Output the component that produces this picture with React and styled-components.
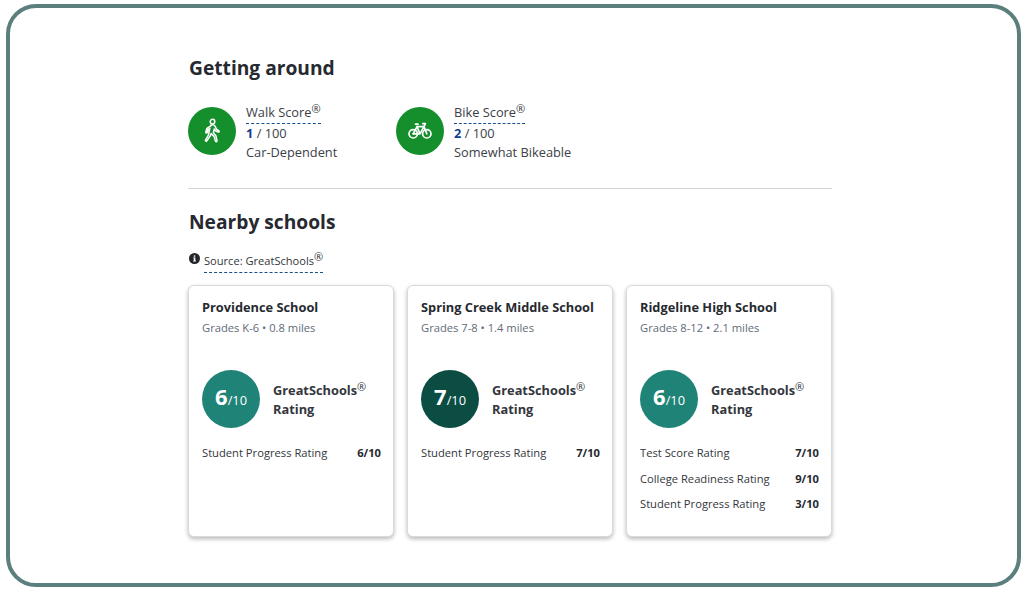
import styled, { createGlobalStyle } from "styled-components";

const GlobalStyle = createGlobalStyle`
  html, body {
    margin: 0;
    padding: 0;
    background: #fff;
    font-family: "Open Sans", "Liberation Sans", sans-serif;
    color: #2a2d33;
  }
`;

const Frame = styled.div`
  box-sizing: border-box;
  width: 1015px;
  height: 583px;
  margin: 4px 0 0 6px;
  border: 4px solid #5b7f7c;
  border-radius: 30px;
  padding: 46px 0 0 178px;
`;

const Content = styled.div`
  width: 644px;
`;

const Heading = styled.h2`
  margin: 0 0 0 1px;
  font-size: 19.2px;
  line-height: 28px;
  font-weight: 700;
  color: #26292f;
`;

const Scores = styled.div`
  display: flex;
  margin-top: 19px;
  height: 70px;
`;

const Score = styled.div`
  display: flex;
  width: 208px;
`;

const ScoreBadge = styled.div`
  width: 48px;
  height: 48px;
  margin-top: 6px;
  border-radius: 50%;
  background: #158f2c;
  color: #fff;
  display: flex;
  align-items: center;
  justify-content: center;
  flex-shrink: 0;
`;

const ScoreText = styled.div`
  margin-left: 10px;
  padding-top: 1px;
  font-size: 12.8px;
  line-height: 19px;
  color: #3c4047;
`;

const ScoreName = styled.div`
  display: inline-block;
  height: 21px;
  line-height: 20px;
  border-bottom: 1px dashed #1a4f8a;
`;

const Mark = styled.sup`
  font-size: 11px;
  line-height: 0;
  vertical-align: 4px;
  font-weight: 400;
  font-variant-emoji: text;
  color: #33363c;
`;

const ScoreValue = styled.div`
  b {
    color: #123f8c;
    font-weight: 700;
  }
`;

const Divider = styled.hr`
  margin: 17px 0 0;
  border: 0;
  border-top: 1px solid #d4d6d8;
`;

const SchoolsHeading = styled(Heading)`
  margin-top: 19px;
`;

const Source = styled.div`
  display: flex;
  margin: 15px 0 0 1px;
  height: 24px;
`;

const InfoIcon = styled.svg`
  width: 11px;
  height: 11px;
  margin-top: 2px;
  margin-right: 4px;
`;

const SourceLabel = styled.span`
  display: inline-block;
  height: 21px;
  font-size: 11.1px;
  line-height: 20px;
  color: #33363c;
  border-bottom: 1px dashed #1a4f8a;
`;

const Cards = styled.div`
  display: grid;
  grid-template-columns: repeat(3, 206px);
  gap: 13px;
  margin-top: 10px;
`;

const Card = styled.div`
  box-sizing: border-box;
  height: 252px;
  padding: 12px 12px 12px 13px;
  background: #fff;
  border: 1px solid #d9dadc;
  border-radius: 6px;
  box-shadow: 0 2px 4px rgba(0, 0, 0, 0.28);
`;

const SchoolName = styled.div`
  font-size: 12.8px;
  line-height: 18px;
  font-weight: 700;
  color: #26292f;
`;

const SchoolMeta = styled.div`
  margin-top: 4px;
  font-size: 11.2px;
  line-height: 16px;
  color: #5f6b78;
`;

const RatingRow = styled.div`
  display: flex;
  align-items: center;
  margin-top: 34px;
`;

const RatingCircle = styled.div`
  width: 58px;
  height: 58px;
  border-radius: 50%;
  background: ${(p) => p.$color};
  color: #fff;
  display: flex;
  align-items: baseline;
  justify-content: center;
  line-height: 52px;
  font-size: 12.8px;
  flex-shrink: 0;

  b {
    font-size: 22px;
    font-weight: 700;
  }
`;

const RatingLabel = styled.div`
  margin-left: 13px;
  padding-top: 2px;
  font-size: 12.8px;
  line-height: 19px;
  font-weight: 700;
  color: #33363c;
`;

const SubRatings = styled.div`
  margin-top: 16px;
  display: flex;
  flex-direction: column;
  gap: 7.6px;
`;

const SubRating = styled.div`
  display: flex;
  justify-content: space-between;
  font-size: 11.2px;
  line-height: 18px;
  color: #33363c;

  b {
    font-weight: 700;
    color: #26292f;
  }
`;

const WalkIcon = () => (
  <svg width="20" height="26" viewBox="0 0 20 26" fill="none" stroke="currentColor" strokeWidth="1.5" strokeLinejoin="round" strokeLinecap="round">
    <circle cx="10.5" cy="3.6" r="2.3" />
    <path d="M8.6 7.2c1.6-.7 3.6-.5 4.4 1l1.6 3.2 2.2 1.3c.7.5.2 1.6-.7 1.3l-2.8-1.3-1-1.7-1 3.7 2.6 3 1.1 5c.2 1-1.3 1.4-1.6.4l-1.3-4.6-3-2.9-1 2.5-3.2 4.8c-.6.9-1.9.1-1.4-.8l2.9-4.9 1.4-6.6-1.7.9-.9 3c-.3 1-1.6.6-1.4-.4l1-3.6c.9-1.1 2.5-1.7 3.8-2.3z" />
  </svg>
);

const BikeIcon = () => (
  <svg width="24" height="18" viewBox="0 0 24 18" fill="none" stroke="currentColor" strokeWidth="1.7" strokeLinejoin="round" strokeLinecap="round">
    <circle cx="5.2" cy="11.8" r="4.2" />
    <circle cx="18.8" cy="11.8" r="4.2" />
    <path d="M5.2 11.8 9 4.6h7l2.8 7.2" />
    <path d="M9 4.6l3 7.2h-6.8M16 4.6l-4 7.2" />
    <path d="M7.6 2.2H10M14.8 1.6h2.6l-1.4 3" />
  </svg>
);

const schools = [
  {
    name: "Providence School",
    meta: "Grades K-6 • 0.8 miles",
    score: 6,
    color: "#1f8377",
    ratings: [["Student Progress Rating", "6/10"]],
  },
  {
    name: "Spring Creek Middle School",
    meta: "Grades 7-8 • 1.4 miles",
    score: 7,
    color: "#0b4d43",
    ratings: [["Student Progress Rating", "7/10"]],
  },
  {
    name: "Ridgeline High School",
    meta: "Grades 8-12 • 2.1 miles",
    score: 6,
    color: "#1f8377",
    ratings: [
      ["Test Score Rating", "7/10"],
      ["College Readiness Rating", "9/10"],
      ["Student Progress Rating", "3/10"],
    ],
  },
];

const App = () => (
  <>
    <GlobalStyle />
    <Frame>
      <Content>
        <Heading>Getting around</Heading>
        <Scores>
          <Score>
            <ScoreBadge><WalkIcon /></ScoreBadge>
            <ScoreText>
              <ScoreName>Walk Score<Mark>®</Mark></ScoreName>
              <ScoreValue><b>1</b> / 100</ScoreValue>
              <div>Car-Dependent</div>
            </ScoreText>
          </Score>
          <Score>
            <ScoreBadge><BikeIcon /></ScoreBadge>
            <ScoreText>
              <ScoreName>Bike Score<Mark>®</Mark></ScoreName>
              <ScoreValue><b>2</b> / 100</ScoreValue>
              <div>Somewhat Bikeable</div>
            </ScoreText>
          </Score>
        </Scores>
        <Divider />
        <SchoolsHeading>Nearby schools</SchoolsHeading>
        <Source>
          <InfoIcon viewBox="0 0 12 12">
            <circle cx="6" cy="6" r="6" fill="#22252a" />
            <path d="M4.6 5h2.3v3.2h.7v1H4.5v-1h.8V6h-.7z" fill="#fff" />
            <rect x="5.2" y="2.6" width="1.7" height="1.5" fill="#fff" />
          </InfoIcon>
          <SourceLabel>Source: GreatSchools<Mark>®</Mark></SourceLabel>
        </Source>
        <Cards>
          {schools.map((school) => (
            <Card key={school.name}>
              <SchoolName>{school.name}</SchoolName>
              <SchoolMeta>{school.meta}</SchoolMeta>
              <RatingRow>
                <RatingCircle $color={school.color}>
                  <b>{school.score}</b>/10
                </RatingCircle>
                <RatingLabel>
                  GreatSchools<Mark>®</Mark>
                  <br />
                  Rating
                </RatingLabel>
              </RatingRow>
              <SubRatings>
                {school.ratings.map(([label, value]) => (
                  <SubRating key={label}>
                    <span>{label}</span>
                    <b>{value}</b>
                  </SubRating>
                ))}
              </SubRatings>
            </Card>
          ))}
        </Cards>
      </Content>
    </Frame>
  </>
);

export default App;
